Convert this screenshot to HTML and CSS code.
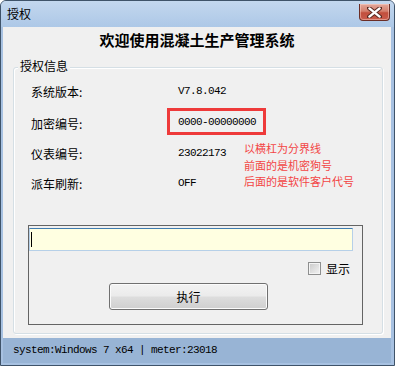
FILE: index.html
```html
<!DOCTYPE html>
<html>

<head>
    <meta charset='utf-8'>
    <title>授权</title>
    <meta name='viewport' content='width=device-width, initial-scale=1'>
    <link rel="stylesheet" href="styles.css">
</head>

<body>

  <div class="window">
    <div class="titlebar">
      <span class="title">授权</span>
      <button class="close-btn" type="button">
        <svg width="15" height="11" viewBox="0 0 15 11">
          <path d="M2 1 L13 10 M13 1 L2 10" stroke="#5a2a22" stroke-width="4.2" stroke-linecap="round"/>
          <path d="M2.4 1.4 L12.6 9.6 M12.6 1.4 L2.4 9.6" stroke="#fff" stroke-width="2.4" stroke-linecap="round"/>
        </svg>
      </button>
    </div>

    <div class="client">
      <h1 class="heading">欢迎使用混凝土生产管理系统</h1>

      <div class="group">
        <span class="group-title">授权信息</span>

        <div class="info">
          <div class="row">
            <span class="label">系统版本:</span>
            <span class="value">V7.8.042</span>
          </div>
          <div class="row row-key">
            <span class="label">加密编号:</span>
            <span class="value boxed">0000-00000000</span>
          </div>
          <div class="row">
            <span class="label">仪表编号:</span>
            <span class="value">23022173</span>
          </div>
          <div class="row">
            <span class="label">派车刷新:</span>
            <span class="value">OFF</span>
          </div>
        </div>

        <!-- red note drawn over the form -->
        <div class="note">
          以横杠为分界线<br>
          前面的是机密狗号<br>
          后面的是软件客户代号
        </div>

        <div class="panel">
          <div class="input-wrap">
            <input class="code-input" type="text">
            <span class="caret"></span>
          </div>
          <div class="show-row">
            <label class="show">
              <span class="check"></span>
              显示
            </label>
          </div>
          <button class="run-btn" type="button">执行</button>
        </div>
      </div>
    </div>

    <div class="statusbar">system:Windows 7 x64 | meter:23018</div>
  </div>

</body>

</html>
```

FILE: styles.css
```css
body {
  margin: 0;
  padding: 0;
  font-family: "Noto Sans CJK SC", "Liberation Sans", sans-serif;
  font-size: 12px;
  color: #000;
  background-color: #fff;
}

.window {
  width: 395px;
  height: 366px;
  box-sizing: border-box;
  border: 1px solid #3f5369;
  border-radius: 6px 6px 0 0;
  background-color: #a7c1e1;
  display: flex;
  flex-direction: column;
  overflow: hidden;
}

.titlebar {
  height: 26px;
  flex-shrink: 0;
  display: flex;
  justify-content: space-between;
  align-items: flex-start;
  padding: 0 4px 0 6px;
  background: linear-gradient(#c3d7ee, #adc8e7);
}

.title {
  line-height: 26px;
  font-size: 12px;
  color: #000;
}

.close-btn {
  margin-top: 3px;
  width: 31px;
  height: 17px;
  padding: 0;
  border: 1px solid #6b2d25;
  border-top: none;
  border-radius: 0 0 4px 4px;
  background: linear-gradient(#e3a89b 0%, #d47f6d 45%, #c24f3d 55%, #c95c4c 100%);
  box-shadow: inset 0 0 0 1px rgba(255, 220, 210, 0.45);
  display: flex;
  justify-content: center;
  align-items: center;
}

.client {
  flex: 1;
  margin: 0 3px 0 2px;
  padding-top: 3px;
  background-color: #f0f0f0;
  display: flex;
  flex-direction: column;
}

.heading {
  margin: 0;
  font-size: 15px;
  font-weight: bold;
  line-height: 20px;
  text-align: center;
}

.group {
  position: relative;
  margin: 17px 8px 0 10px;
  height: 267px;
  box-sizing: border-box;
  border: 1px solid #d5dfe5;
  border-radius: 3px;
  box-shadow: inset 1px 1px 0 #fff, 1px 1px 0 #fff;
}

.group-title {
  position: absolute;
  left: 4px;
  top: -10px;
  padding: 0 2px;
  line-height: 16px;
  background-color: #f0f0f0;
}

.info {
  padding: 8px 0 0 17px;
}

.row {
  display: flex;
  align-items: center;
  height: 30px;
}

.row-key {
  margin-top: 2px;
}

.label {
  width: 147px;
  flex-shrink: 0;
}

.value {
  font-family: "Liberation Mono", monospace;
  font-size: 11px;
  letter-spacing: -0.6px;
}

.boxed {
  margin-left: -11px;
  margin-top: -4px;
  padding: 2px 7px 0 8px;
  width: 78px;
  height: 19px;
  line-height: 19px;
  border: 3px solid #ee3a3a;
}

.note {
  position: absolute;
  left: 230px;
  top: 72px;
  font-size: 11px;
  line-height: 16.5px;
  color: #f34545;
}

.panel {
  margin: 27px 0 0 14px;
  width: 335px;
  height: 100px;
  box-sizing: border-box;
  border: 1px solid #646464;
}

.input-wrap {
  position: relative;
  margin-top: 2px;
  width: 324px;
}

.code-input {
  display: block;
  width: 324px;
  height: 23px;
  box-sizing: border-box;
  border: 1px solid #b6d0e8;
  border-top-color: #3f7cb0;
  background-color: #ffffe1;
  outline: none;
}

.caret {
  position: absolute;
  left: 2px;
  top: 4px;
  width: 1px;
  height: 15px;
  background-color: #000;
}

.show-row {
  display: flex;
  justify-content: flex-end;
  padding-right: 12px;
  margin-top: 9px;
  height: 16px;
}

.show {
  display: flex;
  align-items: center;
  gap: 5px;
}

.check {
  width: 13px;
  height: 13px;
  box-sizing: border-box;
  border: 1px solid #8e8f8f;
  background: linear-gradient(135deg, #c9c9c9, #f4f4f4);
  box-shadow: inset 0 0 0 1px #f4f4f4;
}

.run-btn {
  display: block;
  margin: 7px 0 0 80px;
  width: 159px;
  height: 27px;
  border: 1px solid #707070;
  border-radius: 3px;
  background: linear-gradient(#f2f2f2 0%, #ebebeb 48%, #dddddd 52%, #cfcfcf 100%);
  box-shadow: inset 0 0 0 1px #fbfbfb;
  font-family: "Noto Sans CJK SC", sans-serif;
  font-size: 12px;
  color: #000;
}

.statusbar {
  height: 25px;
  flex-shrink: 0;
  margin: 0 3px 2px 2px;
  padding-left: 10px;
  line-height: 25px;
  background-color: #98b4d5;
  font-family: "Liberation Mono", monospace;
  font-size: 11px;
  letter-spacing: -0.6px;
}
```
